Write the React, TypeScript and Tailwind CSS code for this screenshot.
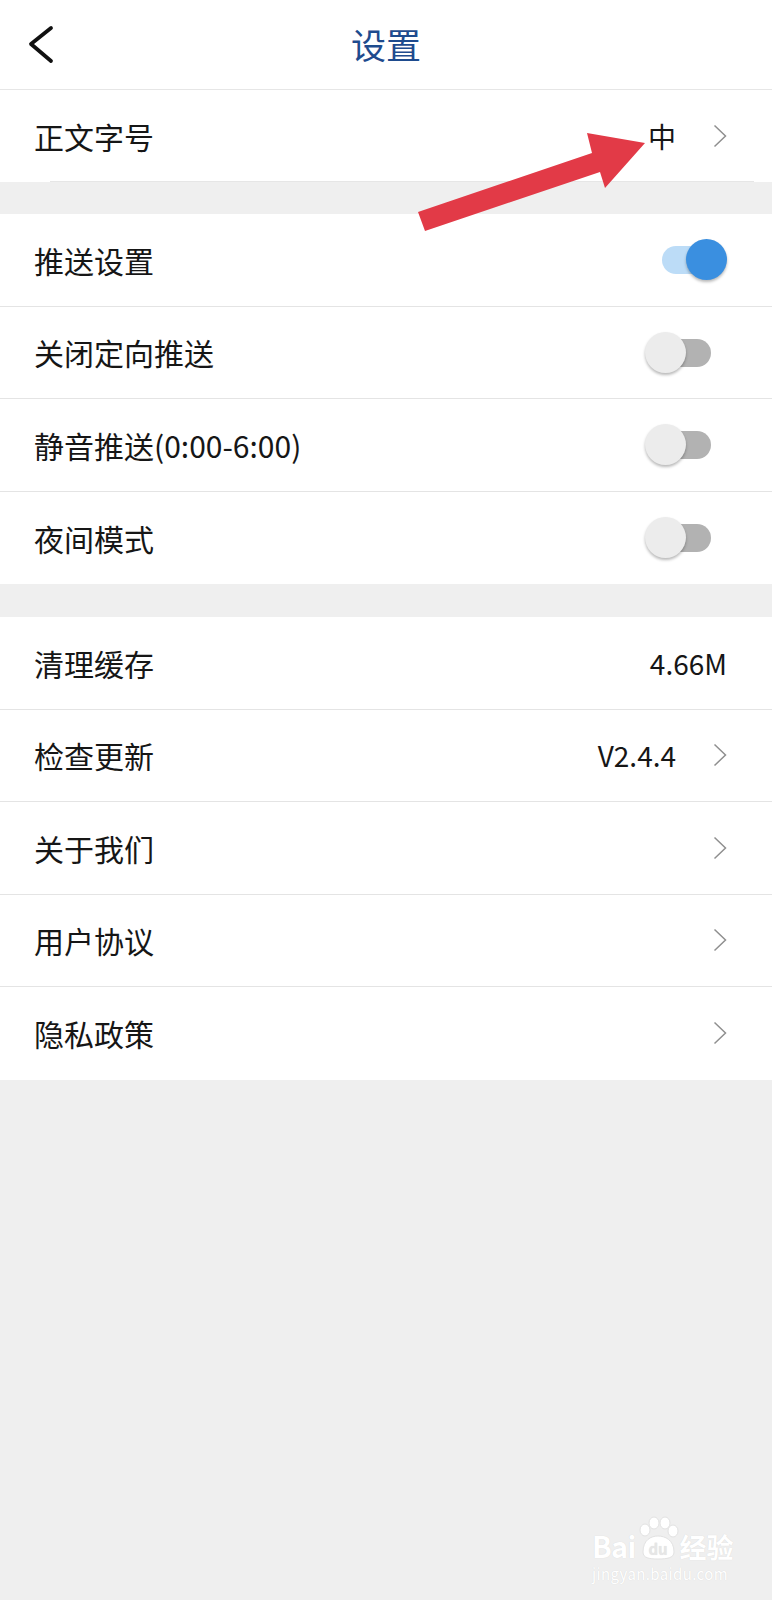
import React from "react";

type Row =
  | { kind: "link"; label: string; value?: string }
  | { kind: "toggle"; label: string; on: boolean }
  | { kind: "value"; label: string; value: string };

const GROUP_PUSH: Row[] = [
  { kind: "toggle", label: "推送设置", on: true },
  { kind: "toggle", label: "关闭定向推送", on: false },
  { kind: "toggle", label: "静音推送(0:00-6:00)", on: false },
  { kind: "toggle", label: "夜间模式", on: false },
];

const GROUP_OTHER: Row[] = [
  { kind: "value", label: "清理缓存", value: "4.66M" },
  { kind: "link", label: "检查更新", value: "V2.4.4" },
  { kind: "link", label: "关于我们" },
  { kind: "link", label: "用户协议" },
  { kind: "link", label: "隐私政策" },
];

function Chevron() {
  return (
    <svg width="14" height="24" viewBox="0 0 14 24" className="shrink-0">
      <path d="M1.5 1.5 L12.5 12 L1.5 22.5" fill="none" stroke="#8f8f8f" strokeWidth="1.5" />
    </svg>
  );
}

function Switch({ on }: { on: boolean }) {
  return (
    <div className="relative h-[41px] w-[82px] shrink-0">
      <div
        className={`absolute left-[17px] top-[7px] h-[28px] w-[49px] rounded-full ${
          on ? "bg-[#bcdcf7]" : "bg-[#b2b2b2]"
        }`}
      />
      <div
        className={`absolute top-0 h-[41px] w-[41px] rounded-full shadow-[0_2px_3px_rgba(0,0,0,0.28)] ${
          on ? "left-[41px] bg-[#3a8fe0]" : "left-0 bg-[#ececec]"
        }`}
      />
    </div>
  );
}

function SettingRow({ row, last }: { row: Row; last: boolean }) {
  return (
    <div
      className={`flex h-[92.5px] items-center bg-white pl-[34px] pr-[45px] ${
        last ? "" : "border-b border-[#e4e4e4]"
      }`}
    >
      <span className="flex-1 text-[30px] leading-none text-[#161616]">{row.label}</span>
      {row.kind === "toggle" && <Switch on={row.on} />}
      {row.kind === "value" && (
        <span className="text-[28px] leading-none text-[#161616]">{row.value}</span>
      )}
      {row.kind === "link" && (
        <div className="flex items-center gap-[37px]">
          {row.value && <span className="text-[28px] leading-none text-[#161616]">{row.value}</span>}
          <Chevron />
        </div>
      )}
    </div>
  );
}

function Group({ rows }: { rows: Row[] }) {
  return (
    <div className="flex flex-col bg-white">
      {rows.map((r, i) => (
        <SettingRow key={r.label} row={r} last={i === rows.length - 1} />
      ))}
    </div>
  );
}

function Watermark() {
  return (
    <div className="pointer-events-none absolute left-[592px] top-[1516px] flex flex-col items-start text-white [text-shadow:0_0_1px_rgba(0,0,0,0.12)]">
      <div className="flex items-end">
        <span className="text-[29px] font-bold leading-none tracking-tight">Bai</span>
        <svg width="42" height="44" viewBox="0 0 42 44" className="mx-[1px]">
          <g fill="#fff" stroke="#e2e2e2" strokeWidth="1">
            <ellipse cx="8" cy="14" rx="5" ry="6" />
            <ellipse cx="17" cy="7" rx="5" ry="6" />
            <ellipse cx="28" cy="7" rx="5" ry="6" />
            <ellipse cx="36" cy="15" rx="5" ry="6" />
            <path d="M6 36 C6 24 14 20 21 20 C28 20 37 24 37 36 C37 42 30 43 21 43 C12 43 6 42 6 36 Z" />
          </g>
          <text x="21" y="39" textAnchor="middle" fontSize="15" fontWeight="700" fill="#e6e6e6" stroke="none">
            du
          </text>
        </svg>
        <span className="text-[27px] font-bold leading-none">经验</span>
      </div>
      <span className="mt-[6px] text-[15px] leading-none tracking-wide">jingyan.baidu.com</span>
    </div>
  );
}

export default function App() {
  return (
    <div
      className="relative min-h-[1600px] w-full bg-[#efefef]"
      style={{ fontFamily: '"Noto Sans CJK SC", "Noto Sans", sans-serif' }}
    >
      <header className="grid h-[90px] grid-cols-[90px_1fr_90px] items-center border-b border-[#e6e6e6] bg-white">
        <svg width="60" height="40" viewBox="0 0 60 40" className="ml-[14px]">
          <path d="M37 7 L17 23 L37 40" fill="none" stroke="#111" strokeWidth="3.8" strokeLinecap="round" strokeLinejoin="round" transform="translate(0,-4)" />
        </svg>
        <h1 className="pb-[3px] text-center text-[35px] leading-none text-[#1e4b8e]">设置</h1>
        <div />
      </header>

      <div className="bg-white">
        <div className="flex h-[91px] items-center pl-[34px] pr-[45px]">
          <span className="flex-1 text-[30px] leading-none text-[#161616]">正文字号</span>
          <div className="flex items-center gap-[37px]">
            <span className="text-[28px] leading-none text-[#161616]">中</span>
            <Chevron />
          </div>
        </div>
        <div className="ml-[50px] mr-[18px] h-px bg-[#e6e6e6]" />
      </div>

      <div className="h-[32px]" />
      <Group rows={GROUP_PUSH} />
      <div className="h-[33px]" />
      <Group rows={GROUP_OTHER} />

      {/* annotation arrow */}
      <svg
        className="pointer-events-none absolute left-0 top-0"
        width="772"
        height="260"
        viewBox="0 0 772 260"
      >
        <polygon
          points="418,212 592,153 587,133 645,143 605,188 600,172 425,231"
          fill="#e23a47"
        />
      </svg>

      <Watermark />
    </div>
  );
}
